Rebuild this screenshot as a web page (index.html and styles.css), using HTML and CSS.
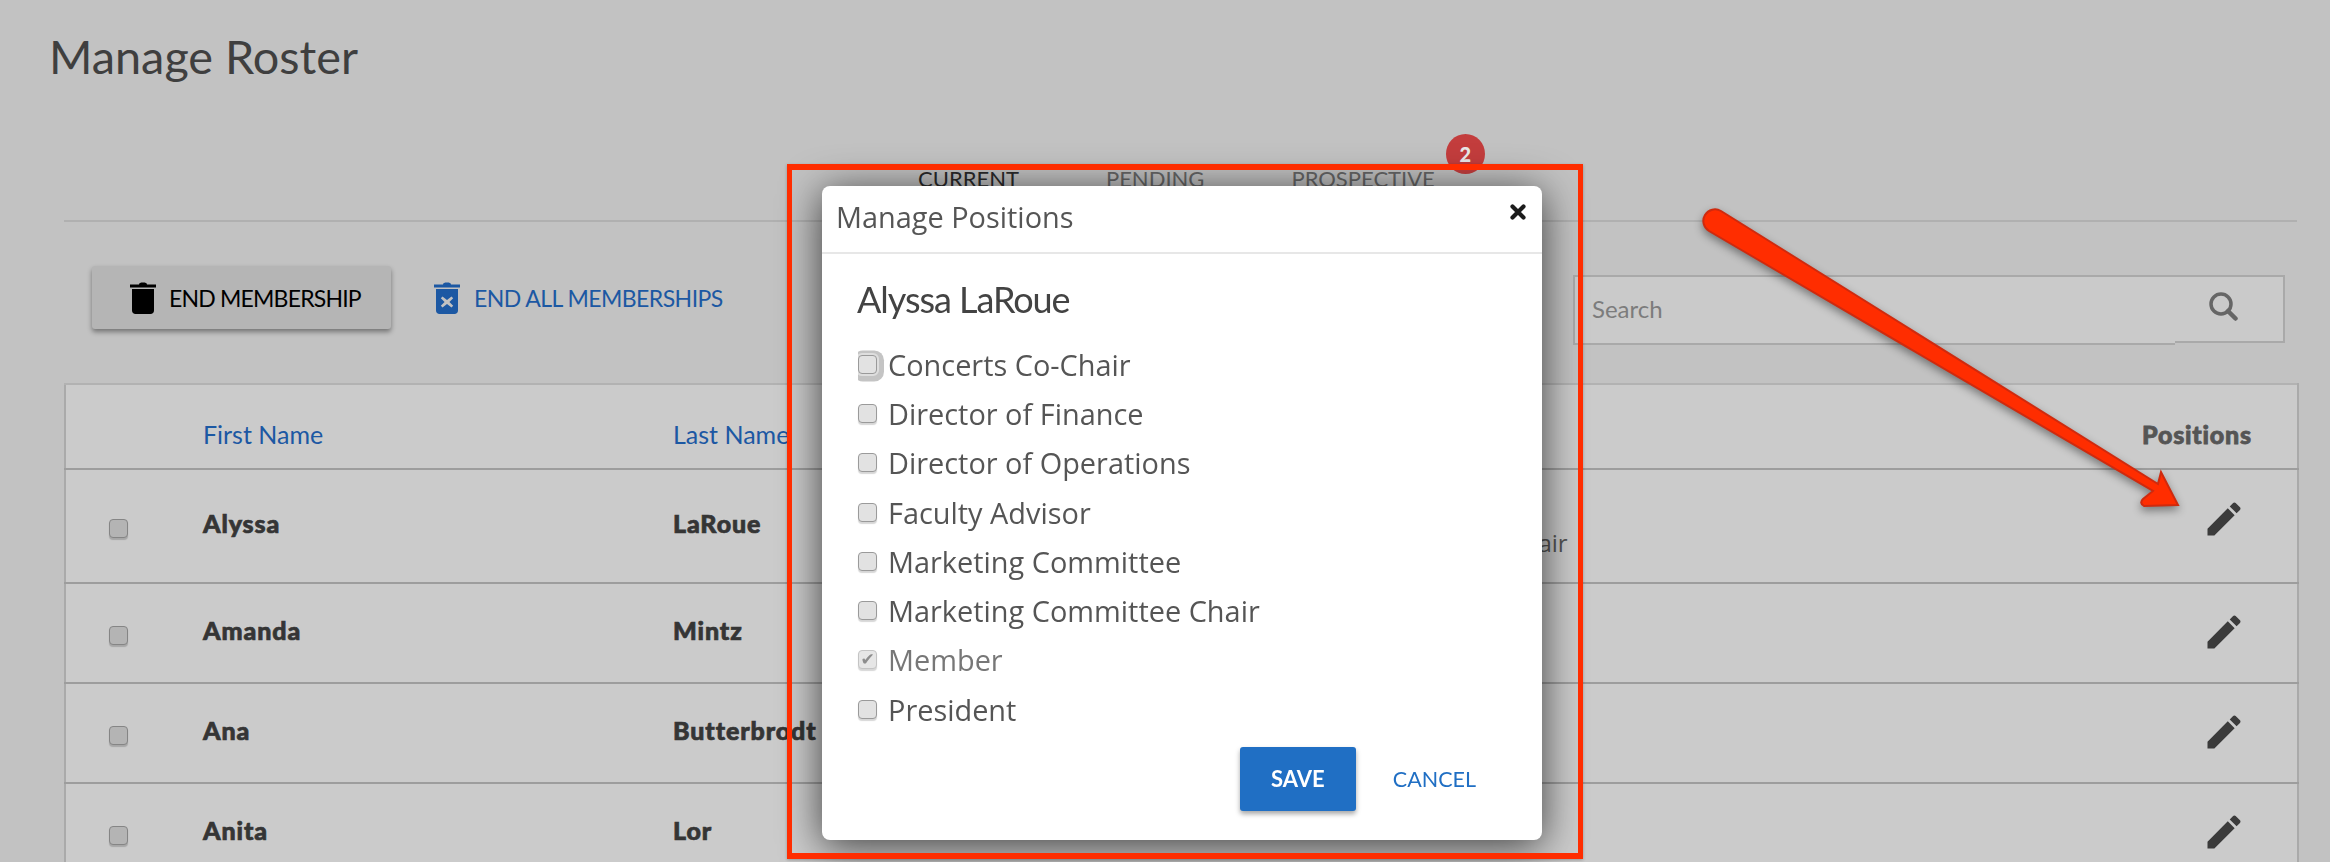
FILE: index.html
```html
<!DOCTYPE html>
<html lang="en">
<head>
<meta charset="utf-8">
<title>Manage Roster</title>
<link rel="stylesheet" href="styles.css">
</head>
<body>
<main class="page">
  <h1 class="title">Manage Roster</h1>
  <nav class="tabs">
    <a class="tab tab-active">CURRENT</a>
    <a class="tab">PENDING</a>
    <a class="tab tab-badged">PROSPECTIVE<span class="badge">2</span></a>
  </nav>
  <div class="toolbar">
    <button class="btn-end">
      <svg class="trash" viewBox="0 0 26 32"><path d="M9 2.500C9 1 10.500.5 13 .5s4 .5 4 2h9v3H0v-3h9zM2 7h22v21.500c0 2-1.500 3.500-3.500 3.500h-15C3.500 32 2 30.500 2 28.500V7z"/></svg>
      END MEMBERSHIP
    </button>
    <a class="link-end">
      <svg class="trash" viewBox="0 0 26 32"><path fill-rule="evenodd" d="M9 2.500C9 1 10.500.5 13 .5s4 .5 4 2h9v3H0v-3h9zM2 7h22v21.500c0 2-1.500 3.500-3.500 3.500h-15C3.500 32 2 30.500 2 28.500V7zm6.500 7.500L6.800 16.200l3.800 3.800-3.800 3.800 1.700 1.700 4.500-3.600 4.500 3.600 1.700-1.700-3.800-3.800 3.800-3.800-1.700-1.700-4.500 3.600z"/></svg>
      END ALL MEMBERSHIPS
    </a>
    <div class="search">
      <span class="search-text">Search</span>
      <svg class="search-icon" viewBox="0 0 30 30"><circle cx="13" cy="13" r="10" fill="none" stroke="currentColor" stroke-width="3.500"/><path d="M20 20l7.500 7.500" stroke="currentColor" stroke-width="4.500" stroke-linecap="round"/></svg>
    </div>
  </div>
  <table class="roster">
    <colgroup><col class="c-check"><col class="c-first"><col class="c-last"><col class="c-pos"><col class="c-edit"></colgroup>
    <thead>
      <tr><th></th><th class="sort">First Name</th><th class="sort">Last Name</th><th></th><th class="plain">Positions</th></tr>
    </thead>
    <tbody>
      <tr class="row-first">
        <td><input class="box box-dim" type="checkbox"></td><td class="name">Alyssa</td><td class="name">LaRoue</td>
        <td class="pos">Member<br>Concerts Co-Chair</td>
        <td class="edit"><svg class="pencil" viewBox="0 0 24 24"><path d="M3 17.250V21h3.750L17.810 9.940l-3.750-3.750L3 17.250zM20.710 7.040c.39-.39.39-1.020 0-1.410l-2.340-2.340c-.39-.39-1.020-.39-1.410 0l-1.830 1.830 3.750 3.750 1.830-1.830z"/></svg></td>
      </tr>
      <tr>
        <td><input class="box box-dim" type="checkbox"></td><td class="name">Amanda</td><td class="name">Mintz</td><td class="pos"></td>
        <td class="edit"><svg class="pencil" viewBox="0 0 24 24"><path d="M3 17.250V21h3.750L17.810 9.940l-3.750-3.750L3 17.250zM20.710 7.040c.39-.39.39-1.020 0-1.410l-2.340-2.340c-.39-.39-1.020-.39-1.410 0l-1.830 1.830 3.750 3.750 1.830-1.830z"/></svg></td>
      </tr>
      <tr>
        <td><input class="box box-dim" type="checkbox"></td><td class="name">Ana</td><td class="name">Butterbrodt</td><td class="pos"></td>
        <td class="edit"><svg class="pencil" viewBox="0 0 24 24"><path d="M3 17.250V21h3.750L17.810 9.940l-3.750-3.750L3 17.250zM20.710 7.040c.39-.39.39-1.020 0-1.410l-2.340-2.340c-.39-.39-1.020-.39-1.410 0l-1.830 1.830 3.750 3.750 1.830-1.830z"/></svg></td>
      </tr>
      <tr>
        <td><input class="box box-dim" type="checkbox"></td><td class="name">Anita</td><td class="name">Lor</td><td class="pos"></td>
        <td class="edit"><svg class="pencil" viewBox="0 0 24 24"><path d="M3 17.250V21h3.750L17.810 9.940l-3.750-3.750L3 17.250zM20.710 7.040c.39-.39.39-1.020 0-1.410l-2.340-2.340c-.39-.39-1.020-.39-1.410 0l-1.830 1.830 3.750 3.750 1.830-1.830z"/></svg></td>
      </tr>
    </tbody>
  </table>
</main>

<section class="modal">
  <header class="modal-head">
    <h2 class="modal-title">Manage Positions</h2>
    <svg class="close" viewBox="0 0 16 16"><path d="M2.500 2.500l11 11M13.500 2.500l-11 11" stroke="#1c1c1c" stroke-width="4.200" stroke-linecap="round"/></svg>
  </header>
  <div class="modal-body">
    <h3 class="person">Alyssa LaRoue</h3>
    <ul class="options">
      <li><label class="option"><input class="box box-focus" type="checkbox">Concerts Co-Chair</label></li>
      <li><label class="option"><input class="box" type="checkbox">Director of Finance</label></li>
      <li><label class="option"><input class="box" type="checkbox">Director of Operations</label></li>
      <li><label class="option"><input class="box" type="checkbox">Faculty Advisor</label></li>
      <li><label class="option"><input class="box" type="checkbox">Marketing Committee</label></li>
      <li><label class="option"><input class="box" type="checkbox">Marketing Committee Chair</label></li>
      <li><label class="option option-off"><input class="box box-checked" type="checkbox" checked disabled>Member</label></li>
      <li><label class="option"><input class="box" type="checkbox">President</label></li>
    </ul>
    <div class="actions">
      <button class="btn-save">SAVE</button>
      <a class="btn-cancel">CANCEL</a>
    </div>
  </div>
</section>

<div class="callout-box"></div>
<svg class="callout-arrow" viewBox="0 0 2330 862"><path d="M1721 211L2158 484 2161 472 2178 505 2144 506Q2139 503 2143 499L2153 491 1709 231A11.500 11.500 0 0 1 1721 211Z"/></svg>
</body>
</html>
```

FILE: styles.css
```css
* { box-sizing: border-box; }
html, body { margin: 0; height: 100%; }
body {
  background: #c2c2c2;
  overflow: hidden;
  font-family: "Lato", "Liberation Sans", sans-serif;
  color: #3d3d3d;
}
.page { padding: 29px 33px 0 64px; }

.title {
  margin: 0 0 0 -15px;
  font-size: 46.800px;
  line-height: 54px;
  font-weight: 400;
  color: #3f3f3f;
}

.tabs {
  display: flex;
  gap: 87px;
  height: 139px;
  padding: 81px 0 0 854px;
  border-bottom: 2px solid #b0b0b0;
}
.tab { position: relative; font-size: 22px; line-height: 30px; color: #666; }
.tab-active { color: #2a2a2a; }
.badge {
  position: absolute;
  top: -30px;
  right: -50px;
  width: 39px;
  height: 40px;
  border-radius: 50%;
  background: #c33d3d;
  color: #e8e8e8;
  font-size: 20px;
  font-weight: 900;
  line-height: 40px;
  text-align: center;
}

.toolbar {
  display: flex;
  align-items: center;
  height: 161px;
  padding: 0 12px 0 28px;
}
.trash { width: 26px; height: 32px; fill: currentColor; }
.btn-end {
  display: flex;
  align-items: center;
  gap: 13px;
  width: 299px;
  height: 63px;
  margin-top: -10px;
  padding: 0 0 0 38px;
  border: 0;
  border-radius: 3px;
  background: #b5b5b5;
  box-shadow: 0 3px 5px rgba(0, 0, 0, .4);
  color: #000;
  font: 400 23px "Lato", sans-serif;
  letter-spacing: -.8px;
}
.link-end {
  display: flex;
  align-items: center;
  gap: 14px;
  margin: -10px 0 0 43px;
  color: #1c58a3;
  font-size: 23px;
  letter-spacing: -.55px;
}
.search {
  position: relative;
  display: flex;
  align-items: center;
  justify-content: space-between;
  width: 712px;
  height: 68px;
  margin: 12px 0 0 auto;
  padding: 0 45px 0 17px;
  border: 2px solid #a9a9a9;
  background: #cacaca;
}
.search::after {
  content: "";
  position: absolute;
  left: -2px;
  bottom: -4px;
  width: 600px;
  height: 4px;
  background: #cacaca;
  border-left: 2px solid #a9a9a9;
  border-bottom: 2px solid #a9a9a9;
}
.search-text { font-size: 24px; color: #7c7c7c; }
.search-icon { width: 30px; height: 30px; margin-bottom: 5px; color: #666; }

.roster {
  width: 2233px;
  table-layout: fixed;
  border-collapse: collapse;
  background: #cbcbcb;
  border-left: 2px solid #aaa;
  border-right: 2px solid #aaa;
  border-top: 2px solid #b2b2b2;
}
.c-check { width: 138px; }
.c-first { width: 470px; }
.c-last { width: 693px; }
.c-pos { width: 776px; }
.c-edit { width: 156px; }
.roster tr { height: 100px; border-bottom: 2px solid #9d9d9d; }
.roster thead tr { height: 85px; }
.roster .row-first { height: 114px; }
.roster th { padding: 14px 0 0; text-align: left; font-size: 25px; font-weight: 400; }
.roster th.sort { color: #1c58a3; }
.roster th.plain { font-weight: 900; font-size: 25px; letter-spacing: .8px; -webkit-text-stroke: .8px #555; color: #555; }
.roster td { padding: 0; }
.roster td:first-child { padding: 4px 0 0 43px; }
.roster td.name {
  padding-bottom: 6px;
  font-size: 25px;
  font-weight: 900;
  letter-spacing: .9px;
  -webkit-text-stroke: .7px #353535;
  color: #353535;
}
.pos { font-family: "Open Sans", sans-serif; font-size: 24px; line-height: 34px; color: #555; }
.roster td.edit { padding: 0 0 2px 60px; line-height: 0; }
.roster .row-first td.edit { padding-bottom: 14px; }
.pencil { width: 44px; height: 44px; fill: #3b3b3b; }

.box {
  appearance: none;
  position: relative;
  flex: none;
  display: block;
  width: 19px;
  height: 19px;
  margin: 0;
  border: 1px solid #9a9a9a;
  border-radius: 4px;
  background: #e2e2e2;
  box-shadow: 0 2px 1px rgba(0, 0, 0, .16);
}
.box-dim { background: #b4b4b4; border-color: #858585; box-shadow: 0 2px 1px rgba(0, 0, 0, .18); }
.box-focus {
  box-shadow: 0 0 0 2px #dedede, 1px 1.500px 0 6px #c4c4c4;
  clip-path: inset(-6px -8px -9px 0 round 3px 7px 7px 3px);
}
.box-checked { background: #e6e6e6; border-color: #c4c4c4; }
.box-checked::after {
  content: "\2714";
  position: absolute;
  inset: 0;
  font: 17px/17px "DejaVu Sans", sans-serif;
  text-align: center;
  color: #8d8d8d;
}

.modal {
  position: fixed;
  left: 822px;
  top: 186px;
  width: 720px;
  height: 654px;
  border-radius: 8px;
  background: #fff;
  box-shadow: 0 6px 40px rgba(0, 0, 0, .7);
  font-family: "Open Sans", sans-serif;
}
.modal-head {
  display: flex;
  justify-content: space-between;
  height: 68px;
  padding: 0 16px 0 14px;
  border-bottom: 2px solid #e7e7e7;
}
.modal-title { margin: 0; font-size: 28.900px; line-height: 62px; font-weight: 400; color: #555; }
.close { width: 16px; height: 18px; margin-top: 17px; }
.modal-body { padding: 0 66px 0 36px; }
.person {
  margin: 0 0 0 -1px;
  padding-top: 23px;
  height: 85.500px;
  font-family: "Lato", sans-serif;
  font-size: 36px;
  line-height: 44px;
  font-weight: 400;
  letter-spacing: -1.050px;
  color: #434343;
}
.options { list-style: none; margin: 0; padding: 0; }
.option {
  display: flex;
  align-items: center;
  gap: 11px;
  height: 49.300px;
  font-size: 28.900px;
  color: #555;
}
.option-off { color: #777; }
.actions {
  display: flex;
  align-items: center;
  justify-content: flex-end;
  gap: 37px;
  margin-top: 13px;
}
.btn-save {
  width: 116px;
  height: 64px;
  border: 0;
  border-radius: 3px;
  background: #206fc4;
  box-shadow: 0 3px 5px rgba(0, 0, 0, .35);
  color: #fff;
  font: 700 22px "Lato", sans-serif;
}
.btn-cancel { color: #206fc4; font: 400 21.500px "Lato", sans-serif; }

.callout-box {
  position: fixed;
  left: 787px;
  top: 164px;
  width: 796px;
  height: 695px;
  border: 5px solid #ff2d00;
  border-top-width: 6px;
  border-bottom-width: 6px;
  box-shadow: 0 1px 3px rgba(0, 0, 0, .25);
}
.callout-arrow {
  position: fixed;
  inset: 0;
  width: 2330px;
  height: 862px;
  filter: drop-shadow(0 4px 4px rgba(0, 0, 0, .4));
}
.callout-arrow path { fill: #ff2d00; stroke: #cf2a0e; stroke-width: 2; }
```
